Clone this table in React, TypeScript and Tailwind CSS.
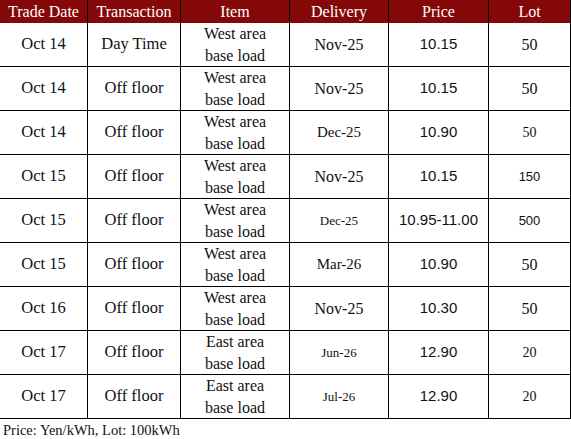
import React from "react";

type Row = {
  date: string;
  tx: string;
  item: [string, string];
  del: string;
  delSize: string;
  price: string;
  lot: string;
  lotCls: string;
};

const serif = "font-['Liberation_Serif',serif]";
const sans = "font-['Liberation_Sans',sans-serif]";

const rows: Row[] = [
  { date: "Oct 14", tx: "Day Time", item: ["West area", "base load"], del: "Nov-25", delSize: "text-[16px]", price: "10.15", lot: "50", lotCls: "font-['Liberation_Serif',serif] text-[16px]" },
  { date: "Oct 14", tx: "Off floor", item: ["West area", "base load"], del: "Nov-25", delSize: "text-[16px]", price: "10.15", lot: "50", lotCls: "font-['Liberation_Serif',serif] text-[16px]" },
  { date: "Oct 14", tx: "Off floor", item: ["West area", "base load"], del: "Dec-25", delSize: "text-[15px]", price: "10.90", lot: "50", lotCls: "font-['Liberation_Serif',serif] text-[14px]" },
  { date: "Oct 15", tx: "Off floor", item: ["West area", "base load"], del: "Nov-25", delSize: "text-[16px]", price: "10.15", lot: "150", lotCls: "font-['Liberation_Sans',sans-serif] text-[13px]" },
  { date: "Oct 15", tx: "Off floor", item: ["West area", "base load"], del: "Dec-25", delSize: "text-[13px]", price: "10.95-11.00", lot: "500", lotCls: "font-['Liberation_Sans',sans-serif] text-[13px]" },
  { date: "Oct 15", tx: "Off floor", item: ["West area", "base load"], del: "Mar-26", delSize: "text-[15px]", price: "10.90", lot: "50", lotCls: "font-['Liberation_Serif',serif] text-[16px]" },
  { date: "Oct 16", tx: "Off floor", item: ["West area", "base load"], del: "Nov-25", delSize: "text-[16px]", price: "10.30", lot: "50", lotCls: "font-['Liberation_Serif',serif] text-[16px]" },
  { date: "Oct 17", tx: "Off floor", item: ["East area", "base load"], del: "Jun-26", delSize: "text-[13px]", price: "12.90", lot: "20", lotCls: "font-['Liberation_Serif',serif] text-[14px]" },
  { date: "Oct 17", tx: "Off floor", item: ["East area", "base load"], del: "Jul-26", delSize: "text-[13px]", price: "12.90", lot: "20", lotCls: "font-['Liberation_Serif',serif] text-[14px]" },
];

const headers = ["Trade Date", "Transaction", "Item", "Delivery", "Price", "Lot"];

export default function App() {
  return (
    <div className="w-[571px] h-[439px] bg-white text-[#111]">
      <div className="grid grid-cols-[88px_93px_109px_99px_100px_82px]">
        {headers.map((h) => (
          <div
            key={h}
            className={`h-[23px] bg-[#840808] border-r border-black text-white text-[16px] leading-[23px] text-center ${serif}`}
          >
            {h}
          </div>
        ))}
        {rows.map((r, i) => (
          <React.Fragment key={i}>
            <div className={`h-[44px] border-r border-b border-black flex items-center justify-center text-[16.5px] ${serif}`}>
              {r.date}
            </div>
            <div className={`h-[44px] border-r border-b border-black flex items-center justify-center text-[16.5px] ${serif}`}>
              {r.tx}
            </div>
            <div className={`h-[44px] border-r border-b border-black flex flex-col items-center justify-center text-[16px] leading-[22px] ${serif}`}>
              <span>{r.item[0]}</span>
              <span>{r.item[1]}</span>
            </div>
            <div className={`h-[44px] border-r border-b border-black flex items-center justify-center ${r.delSize} ${serif}`}>
              {r.del}
            </div>
            <div className={`h-[44px] border-r border-b border-black flex items-center justify-center text-[15px] ${sans}`}>
              {r.price}
            </div>
            <div className={`h-[44px] border-r border-b border-black flex items-center justify-center ${r.lotCls}`}>
              {r.lot}
            </div>
          </React.Fragment>
        ))}
      </div>
      <div className={`pl-[3px] pt-[1px] text-[14.5px] leading-[20px] ${serif}`}>
        Price: Yen/kWh, Lot: 100kWh
      </div>
    </div>
  );
}
